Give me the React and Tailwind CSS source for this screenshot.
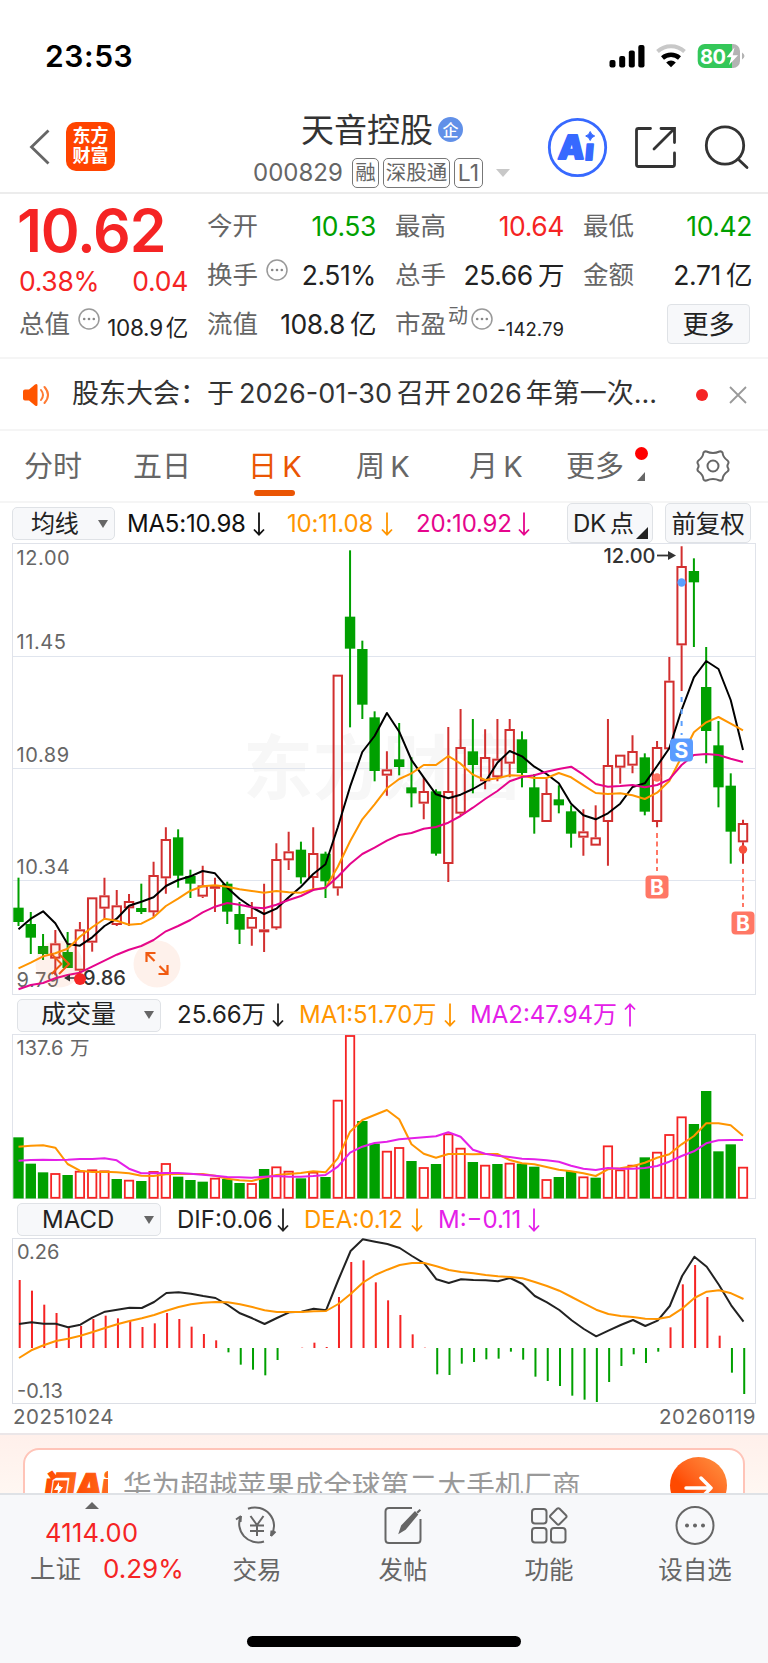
/**
 * File: src/App.jsx
 *
 * Purpose:
 * - Stock detail screen: quote header, daily K chart, volume, MACD
 * - Bottom navigation with the index ticker
 */

const UP = '#d22f2f';
const DOWN = '#00a000';
const RED = '#f52424';

const STEP = 12.28;
const X0 = 18.5;
const cx = (i) => X0 + i * STEP;

// [direction, high, body top, body bottom, low], in thirds of a pixel below y = 540
const candles = [
  ['d', 1013, 1103, 1146, 1158], ['d', 1116, 1152, 1193, 1242], ['d', 1182, 1218, 1242, 1260],
  ['u', 1170, 1210, 1256, 1306], ['d', 1176, 1236, 1284, 1284], ['u', 1146, 1168, 1292, 1300],
  ['u', 1072, 1072, 1208, 1235], ['u', 1013, 1066, 1106, 1140], ['u', 1050, 1096, 1155, 1158],
  ['u', 1062, 1083, 1105, 1158], ['d', 1031, 1104, 1116, 1122], ['u', 965, 1005, 1117, 1130],
  ['u', 862, 897, 1015, 1061], ['d', 868, 892, 1007, 1043], ['d', 989, 1008, 1031, 1074],
  ['u', 977, 1036, 1070, 1074], ['u', 1013, 1038, 1046, 1116], ['d', 1025, 1031, 1115, 1152],
  ['d', 1086, 1122, 1169, 1212], ['u', 1086, 1131, 1166, 1217], ['u', 1031, 1168, 1177, 1236],
  ['u', 910, 957, 1165, 1169], ['u', 875, 934, 961, 990], ['d', 905, 929, 1012, 1031],
  ['u', 862, 939, 1014, 1050], ['d', 935, 941, 1024, 1074], ['u', 404, 404, 1045, 1067],
  ['d', 31, 230, 326, 562], ['d', 302, 327, 494, 537], ['d', 514, 532, 693, 724],
  ['u', 634, 688, 707, 767], ['d', 549, 658, 681, 706], ['d', 652, 742, 760, 802],
  ['u', 712, 753, 791, 838], ['d', 748, 754, 941, 947], ['u', 561, 753, 972, 1026],
  ['u', 507, 621, 821, 826], ['d', 537, 634, 675, 760], ['u', 568, 651, 724, 748],
  ['u', 537, 656, 712, 724], ['u', 537, 567, 671, 712], ['d', 574, 598, 699, 742],
  ['d', 702, 742, 832, 881], ['u', 716, 759, 846, 846], ['d', 736, 778, 796, 820],
  ['d', 796, 814, 881, 923], ['u', 808, 874, 893, 947], ['u', 796, 892, 917, 917],
  ['u', 537, 675, 846, 977], ['u', 644, 644, 683, 731], ['u', 586, 633, 677, 700],
  ['d', 640, 652, 815, 826], ['u', 603, 621, 846, 862], ['u', 351, 422, 628, 628],
  ['u', 19, 78, 316, 453], ['d', 55, 93, 127, 321], ['d', 321, 441, 573, 670],
  ['d', 543, 616, 742, 802], ['d', 700, 737, 875, 971], ['u', 839, 849, 907, 971],
];

const ma5 = [
  1168, 1136, 1114, 1150, 1212, 1217, 1192, 1158, 1136, 1097, 1085, 1072, 1038, 1020, 1009, 993, 1000, 1043, 1076, 1102,
  1122, 1106, 1072, 1040, 1002, 973, 862, 740, 636, 588, 519, 575, 660, 712, 763, 775, 764, 747, 726, 668,
  633, 649, 680, 702, 730, 791, 826, 838, 820, 791, 741, 730, 678, 625, 510, 412, 363, 387, 480, 630,
];
const ma10 = [
  1285, 1268, 1249, 1240, 1226, 1190, 1162, 1136, 1142, 1154, 1151, 1132, 1098, 1076, 1052, 1039, 1036, 1040, 1048, 1053,
  1058, 1053, 1057, 1058, 1048, 1044, 980, 904, 838, 793, 745, 717, 700, 675, 675, 648, 671, 704, 720, 715,
  706, 707, 714, 714, 699, 712, 736, 759, 762, 760, 766, 777, 758, 723, 650, 577, 547, 531, 551, 571,
];
const ma20 = [
  1348, 1335, 1329, 1315, 1305, 1298, 1280, 1262, 1244, 1229, 1218, 1200, 1174, 1158, 1140, 1117, 1100, 1089, 1094, 1102,
  1105, 1094, 1080, 1068, 1050, 1043, 1010, 972, 942, 923, 902, 885, 879, 866, 861, 848, 828, 803, 777, 753,
  724, 711, 706, 695, 687, 680, 704, 732, 740, 738, 735, 742, 735, 718, 675, 645, 642, 645, 656, 666,
];

// thirds of a pixel below y = 990
const volumes = [
  442, 521, 547, 549, 555, 542, 538, 541, 567, 569, 573, 543, 519, 560, 570, 575, 563, 567, 579, 579,
  537, 529, 542, 565, 545, 561, 329, 135, 393, 461, 482, 471, 513, 531, 522, 430, 473, 516, 524, 522,
  518, 521, 530, 567, 561, 543, 559, 563, 466, 538, 524, 502, 485, 432, 379, 402, 303, 484, 463, 530,
];
const volumeUp = [
  3, 5, 6, 7, 9, 11, 12, 16, 19, 21, 22, 24, 26, 27, 30, 31, 33, 35, 36, 38, 40, 43, 46, 48, 49, 50, 52, 53, 54, 59,
];
const volMa1 = [
  470, 467, 466, 473, 522, 542, 546, 545, 547, 550, 557, 558, 553, 552, 552, 552, 557, 566, 571, 573,
  563, 555, 552, 549, 544, 547, 505, 425, 390, 375, 360, 388, 463, 491, 503, 492, 492, 493, 492, 492,
  510, 520, 523, 531, 539, 544, 550, 558, 538, 535, 529, 518, 503, 493, 463, 438, 400, 400, 406, 437,
];
const volMa2 = [
  512, 510, 509, 510, 509, 507, 507, 505, 511, 536, 550, 550, 549, 549, 551, 554, 557, 561, 562, 563,
  560, 558, 560, 560, 558, 555, 530, 488, 470, 459, 455, 448, 445, 442, 439, 427, 440, 479, 491, 497,
  501, 506, 508, 511, 515, 527, 536, 540, 534, 536, 536, 534, 528, 515, 498, 484, 460, 451, 450, 450,
];

// thirds of a pixel below y = 1200, zero line at 444
const macd = [
  240, 272, 314, 339, 383, 378, 357, 347, 355, 363, 381, 370, 339, 357, 380, 402, 421, 457, 494, 509,
  526, 480, 444, 443, 428, 441, 291, 186, 181, 247, 301, 345, 403, 443, 523, 525, 491, 486, 478, 476,
  455, 479, 530, 543, 558, 587, 599, 606, 546, 498, 463, 489, 455, 382, 253, 195, 291, 407, 518, 582,
];
const dif = [
  372, 367, 371, 371, 382, 374, 352, 335, 329, 323, 324, 306, 279, 277, 281, 288, 294, 315, 340, 355,
  372, 354, 337, 335, 326, 331, 240, 153, 118, 125, 132, 144, 168, 190, 238, 249, 238, 240, 241, 244,
  234, 252, 288, 307, 330, 361, 387, 409, 392, 375, 360, 378, 362, 318, 228, 170, 200, 255, 316, 365,
];
const dea = [
  474, 451, 436, 423, 416, 407, 396, 384, 373, 363, 355, 345, 332, 321, 313, 308, 306, 307, 313, 321,
  331, 336, 336, 336, 334, 333, 312, 282, 248, 225, 209, 195, 189, 189, 199, 210, 216, 220, 225, 229,
  231, 235, 246, 258, 272, 291, 310, 329, 342, 348, 351, 356, 357, 350, 326, 294, 275, 271, 280, 297,
];

const line = (values, base, dx = 0) =>
  values.map((v, i) => `${(cx(i) + dx).toFixed(1)},${(base + v / 3).toFixed(1)}`).join(' ');

const Line = ({ values, base, color, dx }) => (
  <polyline
    points={line(values, base, dx)}
    fill="none"
    stroke={color}
    strokeWidth="2"
    strokeLinejoin="round"
  />
);

const Arrow = ({ up = false, className = '' }) => (
  <svg
    viewBox="0 0 12 24"
    className={`w-3 h-6 shrink-0 ${up ? 'rotate-180' : ''} ${className}`}
    fill="none"
    stroke="currentColor"
    strokeWidth="1.8"
  >
    <path d="M6 0.5v22M1 17.5l5 5.2 5-5.2" />
  </svg>
);

const More = ({ className = '' }) => (
  <svg viewBox="0 0 22 22" className={`w-[22px] h-[22px] shrink-0 ${className}`}>
    <circle cx="11" cy="11" r="10" fill="none" stroke="#999" strokeWidth="1.5" />
    <circle cx="6.2" cy="11" r="1.3" fill="#888" />
    <circle cx="11" cy="11" r="1.3" fill="#888" />
    <circle cx="15.8" cy="11" r="1.3" fill="#888" />
  </svg>
);

const Caret = () => (
  <svg viewBox="0 0 10 8" className="w-[10px] h-2 shrink-0" fill="#666">
    <path d="M0 0h10L5 8z" />
  </svg>
);

const StatusBar = () => (
  <div className="flex h-24 items-center pt-4 pl-[45px] pr-[22px]">
    <span className="text-[30px] font-semibold tracking-[0.6px] text-black leading-none">
      23:53
    </span>
    <svg viewBox="608 40 138 32" className="ml-auto w-[138px] h-8">
      <rect x="609.5" y="60" width="6" height="7.5" rx="2" />
      <rect x="619.2" y="56" width="6" height="11.5" rx="2" />
      <rect x="628.8" y="50.5" width="6" height="17" rx="2" />
      <rect x="638.3" y="45" width="6.2" height="22.5" rx="2" />
      <path d="M657.500 51.500a20 20 0 0 1 27 0" fill="none" stroke="#c8c8c8" strokeWidth="4" />
      <path d="M662.500 58a13 13 0 0 1 17 0" fill="none" stroke="#000" strokeWidth="4.500" />
      <path d="M671 67.300l-4.800-4.800a7 7 0 0 1 9.600 0z" />
      <clipPath id="bat">
        <rect x="697.7" y="44" width="42.300" height="24" rx="7" />
      </clipPath>
      <g clipPath="url(#bat)">
        <rect x="697" y="44" width="35" height="24" fill="#34c759" />
        <rect x="732" y="44" width="9" height="24" fill="#b3b3b3" />
      </g>
      <path d="M742 52.500q5 3.500 0 7z" fill="#b3b3b3" />
      <text x="700" y="63.600" fontSize="20" fontWeight="700" letterSpacing="-0.500" fill="#fff">80</text>
      <path d="M734.500 47.500l-8 9.800h4.800l-2.300 7.700 9-9.800h-5.300z" fill="#fff" />
    </svg>
  </div>
);

const Tag = ({ className, children }) => (
  <span
    className={`flex h-[30px] items-center justify-center rounded-[5px] border-[1.5px] border-[#777] text-[#666] ${className}`}
  >
    {children}
  </span>
);

const Header = () => (
  <div className="flex h-[98px] border-b-2 border-[#ececec]">
    <div className="flex items-center w-[253px] pl-[28px]">
      <svg viewBox="0 0 24 38" className="mt-[6px] w-6 h-[38px]" fill="none" stroke="#666" strokeWidth="2.800">
        <path d="M20.500 2.500L3.500 19l17 16.500" />
      </svg>
      <div className="ml-[14px] mt-[4px] flex size-[49px] flex-col items-center justify-center rounded-[10px] bg-[#ff4400] text-[18px] font-bold leading-[20px] text-white">
        <span>东方</span>
        <span>财富</span>
      </div>
    </div>
    <div className="flex w-[271px] flex-col">
      <div className="flex items-center pl-[48px] pt-[15px]">
        <span className="text-[33px] leading-[38px] text-[#333]">天音控股</span>
        <span className="ml-[5px] mb-[1px] flex size-[25px] items-center justify-center rounded-full bg-[#6190e8] text-[16px] font-medium leading-none text-white">
          企
        </span>
      </div>
      <div className="flex items-center pt-[9px] whitespace-nowrap">
        <span className="w-[99px] text-[24px] leading-[30px] text-[#666]">000829</span>
        <Tag className="w-[27px] text-[20.500px]">融</Tag>
        <Tag className="ml-[4px] w-[67px] text-[20.500px]">深股通</Tag>
        <Tag className="ml-[4px] w-[29px] text-[23px]">L1</Tag>
        <svg viewBox="0 0 14 8" className="ml-[13px] w-[14px] h-2" fill="#c8c8c8">
          <path d="M0 0h14L7 8z" />
        </svg>
      </div>
    </div>
    <svg viewBox="524 96 244 96" className="w-[244px] h-24" fill="none">
      <circle cx="577.500" cy="147.500" r="28.200" stroke="#3769ff" strokeWidth="2.800" />
      <g fill="#3769ff" stroke="#3769ff" strokeWidth="1.800" strokeLinejoin="round" fontWeight="900">
        <text transform="translate(557.500 158.500) skewX(-5)" fontSize="33">A</text>
        <text transform="translate(584.500 159.500) skewX(-5)" fontSize="29">ı</text>
      </g>
      <path d="M590.200 131.500q1 3.500 4.500 4.500-3.500 1-4.500 4.500-1-3.500-4.500-4.500 3.500-1 4.500-4.500z" fill="#3769ff" stroke="#3769ff" />
      <g stroke="#333" strokeWidth="2.800" strokeLinecap="round">
        <path d="M650.500 128.500H638.500q-2 0-2 2v34q0 2 2 2h34q2 0 2-2V153" />
        <path d="M661 128.500h13.500V142.500M674 129L654 149" />
        <circle cx="725" cy="145.500" r="18.700" />
        <path d="M738 159l9 8.500" />
      </g>
    </svg>
  </div>
);

const Label = ({ children }) => (
  <span className="text-[25.500px] text-[#666]">{children}</span>
);

const Stat = ({ label, value, unit, color = 'text-[#222]', small = false, info = false }) => (
  <div className="flex h-[49px] items-center whitespace-nowrap">
    <Label>{label}</Label>
    {info && <More className="mb-[11px] ml-[8px]" />}
    <span
      className={`ml-auto ${color} ${small ? 'mt-[6px] text-[22.500px] -tracking-[0.3px]' : 'text-[26.500px] -tracking-[0.4px]'}`}
    >
      {value}
      {unit && <span className={small ? 'ml-[3px]' : 'ml-[5px]'}>{unit}</span>}
    </span>
  </div>
);

const Quote = () => (
  <div className="flex h-[165px] gap-[19px] border-b-2 border-[#f5f5f5] pl-[19px]">
    <div className="w-[169px] shrink-0">
      <div className="-ml-[2px] flex h-[73px] items-center text-[59px] font-semibold leading-none -tracking-[1.100px] text-[#f52424]">
        10.62
      </div>
      <div className="flex h-[30px] items-center justify-between text-[26.500px] -tracking-[0.3px] text-[#f52424]">
        <span>0.38%</span>
        <span>0.04</span>
      </div>
      <div className="mt-[3px]">
        <Stat label="总值" value="108.9" unit="亿" small info />
      </div>
    </div>
    <div className="w-[169px] shrink-0 pt-[8px]">
      <Stat label="今开" value="10.53" color="text-[#00a000]" />
      <Stat label="换手" value="2.51%" info />
      <Stat label="流值" value="108.8" unit="亿" />
    </div>
    <div className="w-[169px] shrink-0 pt-[8px]">
      <Stat label="最高" value="10.64" color="text-[#f52424]" />
      <Stat label="总手" value="25.66" unit="万" />
      <div className="flex h-[49px] items-center whitespace-nowrap">
        <Label>市盈</Label>
        <span className="mb-[17px] ml-[2px] text-[20px] leading-none text-[#666]">动</span>
        <More className="mb-[11px] ml-[3px]" />
        <span className="ml-auto mt-[10px] text-[18.500px] tracking-[0.1px] text-[#222]">-142.79</span>
      </div>
    </div>
    <div className="w-[169px] shrink-0 pt-[8px]">
      <Stat label="最低" value="10.42" color="text-[#00a000]" />
      <Stat label="金额" value="2.71" unit="亿" />
      <div className="ml-[84px] mt-[4px] flex h-10 w-[83px] items-center justify-center rounded-[4px] border-[1.5px] border-[#dfe2e6] bg-[#f7f8fa] text-[26px] text-[#222]">
        更多
      </div>
    </div>
  </div>
);

const Notice = () => (
  <div className="flex h-[72px] items-center border-b-2 border-[#f5f5f5] pl-[23px] pt-[1px]">
    <svg viewBox="0 0 28 24" className="w-7 h-6 shrink-0">
      <path d="M0 8.500q0-2 2-2h4l6-5q2.500-1.500 2.500 1v19q0 2.500-2.500 1l-6-5H2q-2 0-2-2z" fill="#ff5500" />
      <path d="M18 7q4 5 0 10M21.500 4q7 8 0 16" fill="none" stroke="#ff7a33" strokeWidth="2" strokeLinecap="round" />
    </svg>
    <div className="ml-[21px] w-[600px] shrink-0 whitespace-nowrap text-[27px] text-[#333]">
      <span>股东大会：</span>
      <span>于</span>
      <span className="mx-[5px]">2026-01-30</span>
      <span>召开</span>
      <span className="mx-[4px]">2026</span>
      <span>年第一次...</span>
    </div>
    <span className="ml-[24px] size-3 shrink-0 rounded-full bg-[#f52424]" />
    <svg viewBox="0 0 18 18" className="ml-[21px] size-[18px] shrink-0" stroke="#999" strokeWidth="1.800">
      <path d="M1 1l16 16M17 1L1 17" />
    </svg>
  </div>
);

const tabs = [
  { label: '分时', width: 'w-[109px]' },
  { label: '五日', width: 'w-[115px]' },
  { label: '日 K', width: 'w-[108px]', active: true },
  { label: '周 K', width: 'w-[113px]' },
  { label: '月 K', width: 'w-[97px]' },
];

const Tabs = () => (
  <div className="flex h-[72px] border-b-2 border-[#f5f5f5] pl-[24px] pt-[16px] text-[29px] leading-[40px] text-[#666]">
    {tabs.map((tab) => (
      <div
        key={tab.label}
        className={`${tab.width} whitespace-nowrap [word-spacing:-3px] ${tab.active ? 'text-[#ea5504]' : ''}`}
      >
        {tab.label}
        {tab.active && <div className="mt-[3px] h-[6px] w-[41px] ml-[6px] rounded-full bg-[#ea5504]" />}
      </div>
    ))}
    <div className="relative w-[130px] whitespace-nowrap">
      更多
      <span className="absolute left-[69px] top-0 size-[12.5px] rounded-full bg-[#ff0000]" />
      <svg viewBox="0 0 8 9" className="absolute left-[71px] top-[25px] w-2 h-[9px]" fill="#666">
        <path d="M8 0v9H0z" />
      </svg>
    </div>
    <svg viewBox="0 0 34 34" className="mt-[2px] size-[34px]" fill="none" stroke="#666" strokeWidth="2">
      <path d="M10.500 2.500q6.500 3 13 0 2-0.500 3 1 0.500 5 5 8 1.500 1 0.800 3-1.800 2.500 0 5 0.700 2-0.800 3-4.500 3-5 8-1 1.500-3 1-6.500-3-13 0-2 0.500-3-1-0.500-5-5-8-1.500-1-0.800-3 1.800-2.500 0-5-0.700-2 0.800-3 4.500-3 5-8 1-1.500 3-1z" />
      <circle cx="17" cy="17" r="5.500" />
    </svg>
  </div>
);

const Picker = ({ label, className }) => (
  <div
    className={`flex h-[33px] shrink-0 items-center justify-between rounded-[5px] border-[1.5px] border-[#dfe2e6] bg-[#f7f8fa] text-[#222] ${className}`}
  >
    <span>{label}</span>
    <Caret />
  </div>
);

const Reading = ({ text, className, up = false }) => (
  <div className={`flex shrink-0 items-center justify-between whitespace-nowrap ${className}`}>
    <span>{text}</span>
    <Arrow up={up} />
  </div>
);

const MaBar = () => (
  <div className="flex h-10 items-center pl-3 text-[24px] -tracking-[0.2px]">
    <Picker label="均线" className="mt-[1px] w-[103px] pl-[18px] pr-[6px]" />
    <Reading text="MA5:10.98" className="mt-[2px] ml-[12px] w-[138px] text-[#111]" />
    <Reading text="10:11.08" className="mt-[2px] ml-[22px] w-[106px] text-[#ff9500]" />
    <Reading text="20:10.92" className="mt-[2px] ml-[23px] w-[114px] text-[#e5058c]" />
    <div className="relative ml-[37px] flex h-10 w-[86px] items-center rounded-[5px] border-[1.5px] border-[#dfe2e6] bg-[#f7f8fa] pl-[5px] pt-[2px] text-[#222] whitespace-nowrap">
      DK<span className="ml-[4px]">点</span>
      <svg viewBox="0 0 12 12" className="absolute bottom-[3px] right-[4px] size-3" fill="#222">
        <path d="M12 0v12H0z" />
      </svg>
    </div>
    <div className="ml-3 flex h-10 w-[86px] items-center justify-center rounded-[5px] border-[1.5px] border-[#dfe2e6] bg-[#f7f8fa] pt-[2px] text-[24.500px] text-[#222] whitespace-nowrap">
      前复权
    </div>
  </div>
);

const Signal = ({ x, y, letter, color }) => (
  <g>
    <rect x={x - 11.5} y={y - 11.500} width="23" height="23" rx="4" fill={color} />
    <text x={x} y={y + 7.500} textAnchor="middle" fontSize="21" fontWeight="700" fill="#fff">
      {letter}
    </text>
  </g>
);

const PriceChart = () => (
  <svg viewBox="0 543 768 452" className="block w-[768px] h-[452px]">
    <text x="243" y="794" fontSize="70" fontWeight="700" fill="#f7f7f7">东方财富</text>
    <rect x="12.500" y="543.500" width="743" height="451" fill="none" stroke="#e0e3ea" />
    {[656.500, 768.500, 880.500].map((y) => (
      <path key={y} d={`M13 ${y}h742`} stroke="#e0e5ee" />
    ))}
    <g fontSize="20" fill="#666" letterSpacing="0.600">
      <text x="16.500" y="565.300">12.00</text>
      <text x="16.500" y="649.300">11.45</text>
      <text x="16.500" y="761.800">10.89</text>
      <text x="16.500" y="874.300">10.34</text>
      <text x="16.500" y="986.800">9.79</text>
    </g>
    {candles.map(([dir, high, top, bottom, low], i) => {
      const x = cx(i);
      const y = (v) => 540 + v / 3;
      if (dir === 'd') {
        return (
          <g key={i} fill={DOWN}>
            <rect x={x - 1} y={y(high)} width="2" height={(low - high) / 3} />
            <rect x={x - 5.200} y={y(top)} width="10.400" height={(bottom - top) / 3} />
          </g>
        );
      }
      return (
        <g key={i} stroke={UP} strokeWidth="2" fill="none">
          <path d={`M${x} ${y(high)}V${y(top)}M${x} ${y(bottom)}V${y(low)}`} />
          <rect
            x={x - 4.200}
            y={y(top) + 1}
            width="8.400"
            height={Math.max((bottom - top) / 3 - 2, 0.8)}
          />
        </g>
      );
    })}
    <Line values={ma5} base={540} color="#000" />
    <Line values={ma10} base={540} color="#ff9500" />
    <Line values={ma20} base={540} color="#e5058c" />

    {/* high / low marks */}
    <text x="603.500" y="562.800" fontSize="20" fontWeight="500" fill="#333">12.00</text>
    <path d="M657 555.500h15" stroke="#333" strokeWidth="1.800" />
    <path d="M668 551l8 4.500-8 4.500z" fill="#333" />
    <circle cx="681.600" cy="582.500" r="4.200" fill="#5aa0ff" />
    <path d="M681.600 697v38" stroke="#5aa0ff" strokeWidth="2" strokeDasharray="5 7" />
    <circle cx="657" cy="777.500" r="4.200" fill="#ff6e5e" />
    <path d="M657 833v38" stroke="#ff7765" strokeWidth="2" strokeDasharray="5 3.500" />
    <circle cx="743" cy="849.500" r="4.200" fill="#f8503c" />
    <path d="M743 869v38" stroke="#ff7765" strokeWidth="2" strokeDasharray="5 3.500" />
    <Signal x={681.500} y={750} letter="S" color="#5a9cff" />
    <Signal x={657} y={887} letter="B" color="#ff7765" />
    <Signal x={743} y={923} letter="B" color="#ff7765" />

    {/* floating tools */}
    <circle cx="59" cy="964" r="23.500" fill="#f47a3c" fillOpacity="0.1" />
    <circle cx="157" cy="964" r="23.500" fill="#f47a3c" fillOpacity="0.1" />
    <path d="M51.500 954l10 10-10 10M59 954l10 10-10 10" fill="none" stroke="#f05a10" strokeWidth="2" />
    <g fill="none" stroke="#f05a10" strokeWidth="2.200">
      <path d="M146.500 962v-9h9M147 953.500l7.500 7.500" />
      <path d="M167.500 965v9h-9M167 973.500l-7.500-7.500" />
    </g>
    <path d="M79 978h-12" stroke="#333" strokeWidth="1.500" />
    <path d="M70 974.500l-6 3.500 6 3.500z" fill="#333" />
    <text x="83" y="984.500" fontSize="20" fontWeight="500" fill="#333">9.86</text>
    <circle cx="80" cy="979" r="6" fill={RED} />
  </svg>
);

const VolumeBar = () => (
  <div className="flex h-[39px] items-center pl-[17px] pt-[2px] pb-[1px] text-[24px]">
    <Picker label="成交量" className="w-[144px] pl-[23px] pr-[6px] text-[25px]" />
    <Reading text="25.66万" className="ml-[16px] w-[107px] text-[#222]" />
    <Reading text="MA1:51.70万" className="ml-[15px] w-[157px] text-[#ff9500]" />
    <Reading text="MA2:47.94万" up className="ml-[14px] w-[166px] text-[#e420e8]" />
  </div>
);

const VolumeChart = () => (
  <svg viewBox="0 1034 768 165" className="block w-[768px] h-[165px]">
    <rect x="12.500" y="1034.500" width="743" height="164" fill="none" stroke="#e0e3ea" />
    <text x="16.500" y="1054.500" fontSize="20" fill="#666">137.6</text>
    <text x="70" y="1055" fontSize="19.500" fill="#666">万</text>
    {volumes.map((v, i) => {
      const y = 990 + v / 3;
      return volumeUp.includes(i) ? (
        <rect key={i} x={cx(i) - 4.200} y={y + 1} width="8.400" height={1196.800 - y} fill="#fff" stroke={RED} strokeWidth="1.800" />
      ) : (
        <rect key={i} x={cx(i) - 5.200} y={y} width="10.400" height={1198.500 - y} fill={DOWN} />
      );
    })}
    <Line values={volMa1} base={990} color="#ff9500" />
    <Line values={volMa2} base={990} color="#e420e8" />
  </svg>
);

const MacdBar = () => (
  <div className="flex h-[39px] items-center pl-[17px] pt-[2px] text-[24px]">
    <Picker label="MACD" className="w-[144px] pl-[24px] pr-[6px]" />
    <Reading text="DIF:0.06" className="ml-[16px] w-[112px] text-[#222]" />
    <Reading text="DEA:0.12" className="ml-[15px] w-[119px] text-[#ff9500]" />
    <Reading text="M:−0.11" className="ml-[15px] w-[102px] text-[#e420e8]" />
  </div>
);

const MacdChart = () => (
  <svg viewBox="0 1238 768 166" className="block w-[768px] h-[166px]">
    <rect x="12.500" y="1238.500" width="743" height="165" fill="none" stroke="#dcdfe6" />
    <g fontSize="20" fill="#666">
      <text x="17" y="1259.300">0.26</text>
      <text x="17" y="1398.300">-0.13</text>
    </g>
    {macd.map((v, i) => (
      <rect
        key={i}
        x={cx(i) + 0.200}
        y={1200 + Math.min(v, 444) / 3}
        width="2"
        height={Math.abs(v - 444) / 3}
        fill={v < 444 ? RED : DOWN}
      />
    ))}
    <Line values={dif} base={1200} color="#222" dx={0.5} />
    <Line values={dea} base={1200} color="#ff9500" dx={0.5} />
  </svg>
);

const Promo = () => (
  <div className="h-[60px] overflow-hidden border-t-2 border-[#ebe6e8] bg-linear-to-b from-[#fff0eb] to-[#fff7f2] px-[23px] pt-[13px]">
    <div className="flex h-[76px] items-center rounded-[16px] border-2 border-[#ffc4b8] bg-white pl-[17px] pr-[16px]">
      <svg viewBox="0 0 66 32" className="w-[66px] h-8 shrink-0">
        <defs>
          <linearGradient id="ask" gradientUnits="userSpaceOnUse" x1="0" x2="66">
            <stop offset="0" stopColor="#ff4a00" />
            <stop offset="1" stopColor="#ff8a40" />
          </linearGradient>
        </defs>
        <g fill="url(#ask)" stroke="url(#ask)" fontWeight="900">
          <text transform="translate(1 28) skewX(-8)" fontSize="31" strokeWidth="1.500">问</text>
          <text transform="translate(32 28) skewX(-8)" fontSize="34" strokeWidth="1" letterSpacing="-1">Ai</text>
        </g>
        <path d="M17 12l-5 8h4l-1 6 6-9h-4z" fill="#fff" />
      </svg>
      <span className="ml-[15px] whitespace-nowrap text-[28.600px] text-[#999]">
        华为超越苹果成全球第二大手机厂商
      </span>
      <div className="ml-auto mb-[2px] flex size-[57px] shrink-0 items-center justify-center rounded-full bg-linear-to-bl from-[#ff9340] to-[#ff4a00] to-65%">
        <svg viewBox="0 0 30 26" className="mt-[5px] w-[30px] h-[26px]" fill="none" stroke="#fff" strokeWidth="3.500" strokeLinecap="round" strokeLinejoin="round">
          <path d="M2 13h25M17 3l10 10-10 10" />
        </svg>
      </div>
    </div>
  </div>
);

const navItems = [
  {
    label: '交易',
    icon: (
      <>
        <path d="M13 3.800A19 18.500 0 0 1 36 31M36 31l0.500-5.500M36 31l4.500-4.500M29 36.500A19 18.500 0 0 1 6 11M6 11l-5 3.500M6 11l-0.500 6" />
        <path d="M15.500 11l6.500 9 6.500-9M22 20v11M15 20.500h14M15 26h14" />
      </>
    ),
  },
  {
    label: '发帖',
    icon: (
      <>
        <path d="M31 3H8q-3.500 0-3.500 3.500v28Q4.500 38 8 38h28q3.500 0 3.500-3.500V14" />
        <path d="M19 27l2-6L34 7.500l2 2L24 24z" fill="#666" />
        <path d="M37 5.500l1.500 1.500" strokeWidth="4.500" />
      </>
    ),
  },
  {
    label: '功能',
    icon: (
      <>
        <rect x="5" y="4" width="14.500" height="14.500" rx="3" />
        <rect x="5" y="23" width="14.500" height="14.500" rx="3" />
        <rect x="24" y="23" width="14.500" height="14.500" rx="3" />
        <path d="M30 3.800q1.300-1.300 2.600 0l6.400 6.400q1.200 1.200 0 2.400l-6.400 6.400q-1.300 1.200-2.600 0l-6.400-6.400q-1.200-1.200 0-2.400z" />
      </>
    ),
  },
  {
    label: '设自选',
    icon: (
      <>
        <circle cx="22" cy="20.500" r="18.500" />
        <g fill="#666" stroke="none">
          <circle cx="14" cy="20.500" r="2" />
          <circle cx="22" cy="20.500" r="2" />
          <circle cx="30" cy="20.500" r="2" />
        </g>
      </>
    ),
  },
];

const BottomNav = () => (
  <div className="h-[170px] border-t-2 border-[#dfe2e6] bg-[#f7f8fa]">
    <div className="flex h-[141px]">
      <div className="w-[184px] shrink-0 whitespace-nowrap text-[25.500px] leading-[36px]">
        <svg viewBox="0 0 14 7" className="ml-[85px] mt-[7px] w-[14px] h-[7px]" fill="#666">
          <path d="M7 0l7 7H0z" />
        </svg>
        <div className="mt-[6px] pl-[45px] tracking-[0.3px] text-[#f52424]">4114.00</div>
        <div className="flex pl-[30px]">
          <span className="text-[#666]">上证</span>
          <span className="ml-[22px] text-[26px] text-[#f52424]">0.29%</span>
        </div>
      </div>
      {navItems.map((item) => (
        <div key={item.label} className="flex w-[146px] flex-col items-center">
          <svg viewBox="0 0 44 42" className="mt-[10px] w-11 h-[42px] shrink-0" fill="none" stroke="#666" strokeWidth="2">
            {item.icon}
          </svg>
          <span className="mt-[5px] text-[24.500px] leading-[36px] text-[#666]">{item.label}</span>
        </div>
      ))}
    </div>
    <div className="mx-auto h-[11px] w-[274px] rounded-full bg-black" />
  </div>
);

export default function App() {
  return (
    <div className="w-[768px] h-[1663px] overflow-hidden bg-white font-['Inter','Noto_Sans_CJK_SC',sans-serif]">
      <StatusBar />
      <Header />
      <Quote />
      <Notice />
      <Tabs />
      <MaBar />
      <PriceChart />
      <VolumeBar />
      <VolumeChart />
      <MacdBar />
      <MacdChart />
      <div className="flex h-[29px] items-center justify-between pb-[2px] pl-[13px] pr-[12px] text-[20.500px] leading-none tracking-[0.500px] text-[#666]">
        <span>20251024</span>
        <span>20260119</span>
      </div>
      <Promo />
      <BottomNav />
    </div>
  );
}
